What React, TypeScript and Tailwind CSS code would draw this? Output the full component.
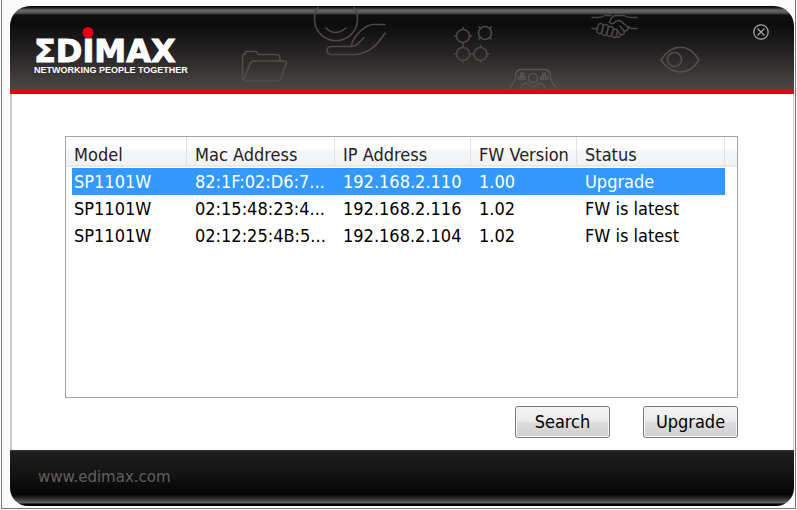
type Device = {
  model: string;
  mac: string;
  ip: string;
  version: string;
  status: string;
};

const devices: Device[] = [
  { model: "SP1101W", mac: "82:1F:02:D6:7...", ip: "192.168.2.110", version: "1.00", status: "Upgrade" },
  { model: "SP1101W", mac: "02:15:48:23:4...", ip: "192.168.2.116", version: "1.02", status: "FW is latest" },
  { model: "SP1101W", mac: "02:12:25:4B:5...", ip: "192.168.2.104", version: "1.02", status: "FW is latest" },
];

const headings = ["Model", "Mac Address", "IP Address", "FW Version", "Status"];

function Logo() {
  return (
    <div className="flex flex-col items-start text-white" role="img" aria-label="Edimax, networking people together">
      <div className="font-['DejaVu_Sans',sans-serif] text-[32px] leading-[26px] font-bold [-webkit-text-stroke:1px_white]">
        ΣD
        <span className="relative">
          I
          <span className="absolute -top-[5px] left-1/2 size-[11px] -translate-x-1/2 rounded-full bg-[#e60012]" />
        </span>
        MAX
      </div>
      <div className="font-['Liberation_Sans',sans-serif] text-[9px] leading-3 font-bold whitespace-nowrap">
        NETWORKING PEOPLE TOGETHER
      </div>
    </div>
  );
}

/* Faint line drawings scattered over the title bar. */
function HeaderArt() {
  return (
    <svg
      className="pointer-events-none absolute top-0 left-0"
      width="784"
      height="83"
      viewBox="10 6 784 83"
      fill="none"
      stroke="#4c4845"
      strokeWidth="1.6"
      strokeLinecap="round"
      strokeLinejoin="round"
      aria-hidden="true"
    >
      {/* folder */}
      <path
        stroke="#524c49"
        d="M244 80q-2-1-1.500-3V57q0-3 3-3V51.500h11l1.500 3H276q4 0 4 4V61M244 79l6-15q1-3 4-3h30q3 0 2 3l-5 14q-1 3-4 3h-31q-3 0-2-3"
      />
      {/* hand holding a smiling coin */}
      <path d="M318 7.500A21.500 21.500 0 1 0 354 7.500M326 28q9 9 20 0" />
      <path d="M385 24.500h-12c-9 1-20 12-22 22M385 33c-8 13-17 21-30 21.500h-24q-4-.5-4-4t4-4h20q5 0 8-4l5-5" />
      {/* linked nodes */}
      <circle cx="463" cy="36" r="6.500" />
      <circle cx="485" cy="33" r="6.500" />
      <circle cx="463" cy="54" r="6.500" />
      <circle cx="480.500" cy="54" r="6.500" />
      <path d="M463 27.500v2M463 42.500v5M454.500 36h2M469.500 36h2M454.500 54h2M469.500 54h4.500M487 54h2M463 60.500v2M480.500 60.500v2M480.500 45.500v2M479 27l1.500 1.500M491 27l-1.500 1.500M479 39l1.500-1.500M491 39l-1.500-1.500" />
      {/* people */}
      <g stroke="#5a5552" strokeWidth="1.400">
        <path d="M510 88c1-4 5-5 5.500-10 0-5 2-8.500 6-8.500h23c4 0 6 3.500 6 8.500 .5 5 4.500 6 5.500 10" />
        <circle cx="533" cy="78" r="4.500" />
        <path d="M521 88c1-4 4-6 7-4l5 4 5-4c3-2 6 0 7 4" />
        <circle cx="522" cy="74.500" r="1.500" />
        <circle cx="519.500" cy="78" r="1.500" />
        <circle cx="524" cy="78" r="1.500" />
        <circle cx="544" cy="74.500" r="1.500" />
        <circle cx="542" cy="78" r="1.500" />
        <circle cx="546.500" cy="78" r="1.500" />
      </g>
      {/* handshake */}
      <g strokeWidth="1.400">
        <path d="M592 17.500h6q4 0 7-2h6M592 28.500h5M637 17.500h-6q-4 0-7-2h-9c-4 1-5 5-5.500 7q3 3 6-1l3-1q3 0 5 3l5 4M637 28.500h-6q-2-2-3-2" />
        <rect x="597.500" y="23.500" width="5" height="10" rx="2.500" transform="rotate(15 600 28.500)" />
        <rect x="602.500" y="24.500" width="5" height="11" rx="2.500" transform="rotate(15 605 30)" />
        <rect x="607.500" y="26.500" width="5" height="10" rx="2.500" transform="rotate(15 610 31.500)" />
        <rect x="612.500" y="29" width="4.500" height="8.500" rx="2.200" transform="rotate(15 614.500 33)" />
        <path d="M617 37q3 1 3.500-2 4 0 4-4 4 0 4-4M620 34l-4-5M624 31l-4-5" />
      </g>
      {/* eye */}
      <g stroke="#524e4b">
        <path d="M661 60c11-17 28-17 38 0-10 16-27 16-38 0z" />
        <circle cx="674.500" cy="59.500" r="7" />
      </g>
    </svg>
  );
}

function TitleBar() {
  return (
    <header className="relative flex h-[88px] items-start justify-between rounded-t-[20px] border-b-[5px] border-[#e60012] bg-[linear-gradient(#000_0px,#222_2px,#686868_4px,#555_7px,#111_9px,#0d0c0c_18px,#242222_45px,#4a4745_83px)] pt-[18px] pr-[25px] pl-6">
      <HeaderArt />
      <div className="pt-[14px]">
        <Logo />
      </div>
      <button type="button" aria-label="Close" className="relative size-4 text-[#aaa]">
        <svg width="16" height="16" viewBox="0 0 16 16" fill="none" stroke="currentColor" strokeWidth="1.2" aria-hidden="true">
          <circle cx="8" cy="8" r="7.200" />
          <path d="M4.500 4.500l7 7M11.500 4.500l-7 7" />
        </svg>
      </button>
    </header>
  );
}

function DeviceList() {
  return (
    <div className="flex-1 border border-[#a0a5ad] bg-[linear-gradient(#fff_0px,#fff_12px,#f5f6f7_13px,#f1f2f4_28px,#d8d9db_29px,#fff_30px)] pr-3 pl-[6px]">
      <table className="w-full table-fixed border-collapse text-left">
        <colgroup>
          <col className="w-[115px]" />
          <col className="w-[148px]" />
          <col className="w-[136px]" />
          <col className="w-[106px]" />
          <col />
        </colgroup>
        <thead>
          <tr className="h-[31px]">
            {headings.map((heading) => (
              <th
                key={heading}
                scope="col"
                className="bg-[linear-gradient(#e0e2e5,#e0e2e5)] bg-[length:1px_28px] bg-[position:right_top] bg-no-repeat pt-1 pl-2 font-normal whitespace-nowrap text-[#222] first:pl-[2px]"
              >
                {heading}
              </th>
            ))}
          </tr>
        </thead>
        <tbody>
          {devices.map((device, index) => (
            <tr key={device.mac} className={index === 0 ? "h-[27px] bg-[#3399ff] text-white" : "h-[27px]"}>
              <td className="pl-[2px]">{device.model}</td>
              <td className="pl-2 whitespace-nowrap">{device.mac}</td>
              <td className="pl-2 whitespace-nowrap">{device.ip}</td>
              <td className="pl-2">{device.version}</td>
              <td className="pl-2 whitespace-nowrap">{device.status}</td>
            </tr>
          ))}
        </tbody>
      </table>
    </div>
  );
}

function PushButton({ label }: { label: string }) {
  return (
    <button
      type="button"
      className="h-8 w-[95px] rounded-[3px] border border-[#777] bg-[linear-gradient(#f3f3f3,#ebebeb_48%,#dddddd_50%,#cfcfcf)] shadow-[inset_0_0_0_1px_#f8f8f8]"
    >
      {label}
    </button>
  );
}

export default function App() {
  return (
    <div className="flex min-h-screen bg-white pr-px pb-px pl-px font-['DejaVu_Sans_Condensed','DejaVu_Sans',sans-serif] text-[18px] leading-[22px] text-black">
      <div className="flex flex-1 flex-col border-x border-b border-[#777] bg-[#fbfbfb] pt-[6px] pr-px pb-[2px] pl-2">
        <TitleBar />
        <main className="flex flex-1 flex-col border-r border-l-2 border-[#ccc] bg-white pt-[42px] pr-[55px] pb-3 pl-[53px]">
          <DeviceList />
          <div className="flex justify-end gap-[33px] pt-2">
            <PushButton label="Search" />
            <PushButton label="Upgrade" />
          </div>
        </main>
        <footer className="flex h-14 items-start rounded-b-[18px] bg-[linear-gradient(#3a3a3a_0px,#1f1f1f_2px,#151413_24px,#050505_44px,#111_46px,#666_53px,#000_54px)] px-7 pt-4">
          <a href="#edimax" className="font-['DejaVu_Sans',sans-serif] text-[15px] leading-[22px] text-[#625f5d]">
            www.edimax.com
          </a>
        </footer>
      </div>
    </div>
  );
}
